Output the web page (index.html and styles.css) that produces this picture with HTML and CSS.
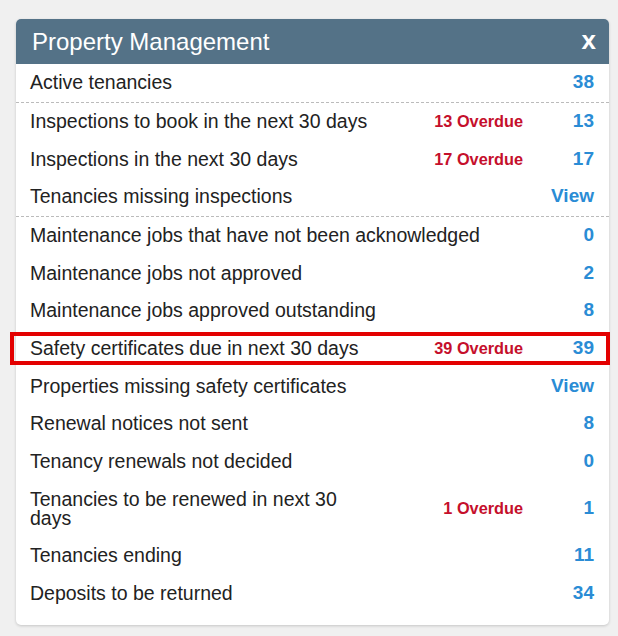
FILE: index.html
```html
<!DOCTYPE html>
<html lang="en">
<head>
<meta charset="utf-8">
<title>Property Management</title>
<link rel="stylesheet" href="styles.css">
</head>
<body>
<div class="card">
  <div class="card-header">
    <span class="title">Property Management</span>
    <span class="close">x</span>
  </div>
  <div class="group">
    <div class="row"><span class="label">Active tenancies</span><span class="overdue"></span><span class="count">38</span></div>
  </div>
  <div class="group">
    <div class="row has-overdue"><span class="label">Inspections to book in the next 30 days</span><span class="overdue">13 Overdue</span><span class="count">13</span></div>
    <div class="row has-overdue"><span class="label">Inspections in the next 30 days</span><span class="overdue">17 Overdue</span><span class="count">17</span></div>
    <div class="row"><span class="label">Tenancies missing inspections</span><span class="overdue"></span><span class="count">View</span></div>
  </div>
  <div class="group">
    <div class="row"><span class="label">Maintenance jobs that have not been acknowledged</span><span class="overdue"></span><span class="count">0</span></div>
    <div class="row"><span class="label">Maintenance jobs not approved</span><span class="overdue"></span><span class="count">2</span></div>
    <div class="row"><span class="label">Maintenance jobs approved outstanding</span><span class="overdue"></span><span class="count">8</span></div>
    <div class="row has-overdue highlighted"><span class="label">Safety certificates due in next 30 days</span><span class="overdue">39 Overdue</span><span class="count">39</span></div>
    <div class="row"><span class="label">Properties missing safety certificates</span><span class="overdue"></span><span class="count">View</span></div>
    <div class="row"><span class="label">Renewal notices not sent</span><span class="overdue"></span><span class="count">8</span></div>
    <div class="row"><span class="label">Tenancy renewals not decided</span><span class="overdue"></span><span class="count">0</span></div>
    <div class="row has-overdue"><span class="label">Tenancies to be renewed in next 30 days</span><span class="overdue">1 Overdue</span><span class="count">1</span></div>
    <div class="row"><span class="label">Tenancies ending</span><span class="overdue"></span><span class="count">11</span></div>
    <div class="row"><span class="label">Deposits to be returned</span><span class="overdue"></span><span class="count">34</span></div>
  </div>
</div>
</body>
</html>
```

FILE: styles.css
```css
html, body {
  margin: 0;
  padding: 0;
  background: #f0f0f0;
}

body {
  padding: 19px 9px 11px 16px;
  font-family: "Liberation Sans", Arial, sans-serif;
  color: #222;
}

.card {
  width: 593px;
  background: #fff;
  border-radius: 5px;
  box-shadow: 0 1px 3px rgba(0, 0, 0, 0.18);
  padding-bottom: 13px;
}

.card-header {
  height: 45px;
  background: #547287;
  border-radius: 5px 5px 0 0;
  display: flex;
  align-items: center;
  justify-content: space-between;
  padding: 0 13px 0 16px;
  color: #fff;
}

.title {
  font-size: 24px;
  line-height: 28px;
}

.close {
  font-size: 26px;
  font-weight: bold;
  line-height: 28px;
  margin-top: -3px;
}

.group + .group {
  border-top: 1px dashed #bbb;
}

.row {
  position: relative;
  display: grid;
  grid-template-columns: 1fr auto 60px;
  align-items: center;
  padding: 9.3px 15px 9.7px 14px;
  font-size: 19.5px;
  line-height: 18.7px;
}

.row.has-overdue .label {
  max-width: 340px;
}

.overdue {
  color: #c50f2c;
  font-weight: bold;
  font-size: 16.3px;
  margin-right: 11px;
  text-align: right;
}

.count {
  color: #2a8cd5;
  font-weight: bold;
  font-size: 19px;
  text-align: right;
}

.highlighted::after {
  content: "";
  position: absolute;
  left: -6px;
  right: -1px;
  top: 2px;
  bottom: 3px;
  border: 4px solid #e30000;
  pointer-events: none;
}
```
